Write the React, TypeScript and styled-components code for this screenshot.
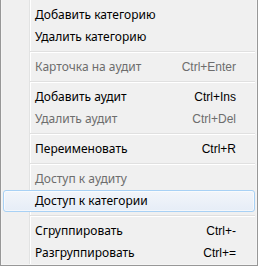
import React from 'react'
import styled, { createGlobalStyle, css } from 'styled-components'

const GlobalStyle = createGlobalStyle`
  html, body {
    margin: 0;
    padding: 0;
    background: #f0f0f0;
  }
  body {
    font-family: 'Noto Sans', 'Liberation Sans', sans-serif;
    font-size: 12px;
  }
`

const Menu = styled.div`
  box-sizing: border-box;
  width: 258px;
  height: 266px;
  padding: 4px 2px 1px 2px;
  display: flex;
  flex-direction: column;
  border: 1px solid #979797;
  border-top: none;
  background-color: #f0f0f0;
  background-image: linear-gradient(
    to right,
    transparent 28px,
    #e2e3e3 28px,
    #e2e3e3 29px,
    #ffffff 29px,
    #ffffff 30px,
    transparent 30px
  );
  box-shadow: inset 1px 0 0 #f5f5f5, inset -1px 0 0 #f5f5f5, inset 0 -1px 0 #f5f5f5;
`

const Item = styled.div<{ $disabled?: boolean; $active?: boolean }>`
  box-sizing: border-box;
  height: 22px;
  flex: none;
  display: flex;
  align-items: center;
  justify-content: space-between;
  padding: 0 18px 0 31px;
  border: 1px solid transparent;
  border-radius: 3px;
  color: ${({ $disabled }) => ($disabled ? '#6d6d6d' : '#000000')};
  white-space: nowrap;

  ${({ $active }) =>
    $active &&
    css`
      border-color: #a8d1f5;
      background: linear-gradient(#f2f5fa, #e6edf7);
      box-shadow: inset 0 0 0 1px rgba(255, 255, 255, 0.55);
    `}
`

const Label = styled.span`
  line-height: 14px;
`

const Shortcut = styled.span`
  font-family: 'Liberation Sans', Arial, sans-serif;
  word-spacing: 0;
`

const Separator = styled.div`
  flex: none;
  height: 8px;
  display: flex;
  flex-direction: column;
  justify-content: center;
  margin-left: 27px;

  &::before {
    content: '';
    height: 1px;
    background: #e0e0e0;
  }
  &::after {
    content: '';
    height: 1px;
    background: #ffffff;
  }
`

type Entry =
  | { sep: true }
  | { label: string; shortcut?: string; disabled?: boolean; active?: boolean }

const entries: Entry[] = [
  { label: 'Добавить категорию' },
  { label: 'Удалить категорию' },
  { sep: true },
  { label: 'Карточка на аудит', shortcut: 'Ctrl+Enter', disabled: true },
  { sep: true },
  { label: 'Добавить аудит', shortcut: 'Ctrl+Ins' },
  { label: 'Удалить аудит', shortcut: 'Ctrl+Del', disabled: true },
  { sep: true },
  { label: 'Переименовать', shortcut: 'Ctrl+R' },
  { sep: true },
  { label: 'Доступ к аудиту', disabled: true },
  { label: 'Доступ к категории', active: true },
  { sep: true },
  { label: 'Сгруппировать', shortcut: 'Ctrl+-' },
  { label: 'Разгруппировать', shortcut: 'Ctrl+=' },
]

export default function App() {
  return (
    <>
      <GlobalStyle />
      <Menu>
        {entries.map((e, i) =>
          'sep' in e ? (
            <Separator key={i} />
          ) : (
            <Item key={i} $disabled={e.disabled} $active={e.active}>
              <Label>{e.label}</Label>
              {e.shortcut && <Shortcut>{e.shortcut}</Shortcut>}
            </Item>
          ),
        )}
      </Menu>
    </>
  )
}
